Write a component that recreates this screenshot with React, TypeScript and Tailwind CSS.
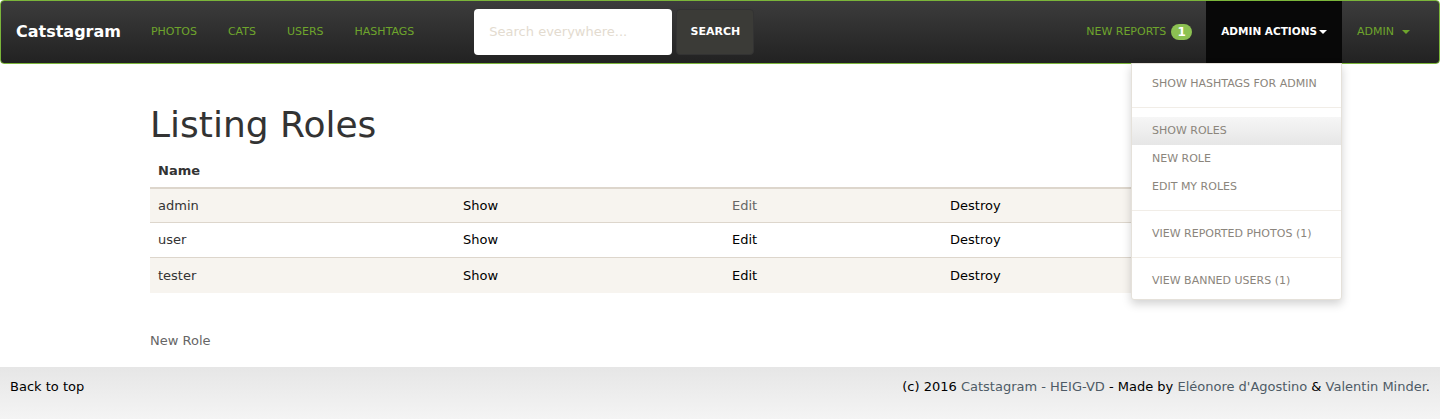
import React from "react";

const font = { fontFamily: '"DejaVu Sans", Verdana, sans-serif' };

const navLinks = ["PHOTOS", "CATS", "USERS", "HASHTAGS"];

const roles = ["admin", "user", "tester"];

const Caret: React.FC<{ className?: string }> = ({ className }) => (
  <svg className={className} width="8" height="4" viewBox="0 0 8 4">
    <path d="M0 0h8L4 4z" fill="currentColor" />
  </svg>
);

const AdminMenu: React.FC = () => (
  <div className="absolute left-[1131px] top-[63px] w-[211px] bg-white border border-[#e5e1da] rounded-b-[3px] shadow-[0_4px_10px_rgba(0,0,0,0.18)] pt-[6px] pb-[4px] text-[11px] leading-[14px] text-[#8b857c] z-10">
    <div className="px-5 py-[7px]">SHOW HASHTAGS FOR ADMIN</div>
    <div className="h-px bg-[#f1ede7] my-[9px]" />
    <div className="px-5 py-[7px] bg-gradient-to-b from-[#f6f6f6] to-[#e6e6e6]">SHOW ROLES</div>
    <div className="px-5 py-[7px]">NEW ROLE</div>
    <div className="px-5 py-[7px]">EDIT MY ROLES</div>
    <div className="h-px bg-[#f1ede7] my-[9px]" />
    <div className="px-5 py-[7px]">VIEW REPORTED PHOTOS (1)</div>
    <div className="h-px bg-[#f1ede7] my-[9px]" />
    <div className="px-5 py-[7px]">VIEW BANNED USERS (1)</div>
  </div>
);

const Navbar: React.FC = () => (
  <div className="h-[64px] border border-[#7bb53a] rounded-[4px] bg-gradient-to-b from-[#3c3c3c] to-[#222222] flex items-stretch overflow-hidden">
    <div className="flex items-center pl-[15px] pr-[15px] text-white text-[16px] font-bold">Catstagram</div>
    <div className="flex items-center gap-[31px] pl-[15px] text-[11px] text-[#6ea52c]">
      {navLinks.map((l) => (
        <span key={l}>{l}</span>
      ))}
    </div>
    <div className="flex items-center ml-[60px] gap-[4px]">
      <div className="w-[198px] h-[46px] bg-white rounded-[4px] flex items-center px-[15px] text-[13px] text-[#e3dbcf]">
        Search everywhere...
      </div>
      <div className="w-[78px] h-[46px] bg-[#3b3b37] rounded-[4px] border border-[#333] flex items-center justify-center text-white text-[11px] font-bold">
        SEARCH
      </div>
    </div>
    <div className="flex-1" />
    <div className="flex items-center pr-[14px] text-[11px] text-[#6ea52c] whitespace-nowrap">
      NEW REPORTS
      <span className="ml-[5px] w-[21px] h-[16px] rounded-full bg-[#8cc152] text-white font-bold text-[12px] flex items-center justify-center">1</span>
    </div>
    <div className="flex items-center bg-[#080808] pl-[15px] pr-[15px] text-white text-[10.5px] font-bold whitespace-nowrap">
      ADMIN ACTIONS
      <Caret className="ml-[2px] text-white" />
    </div>
    <div className="flex items-center pl-[15px] pr-[29px] text-[11px] text-[#6ea52c]">
      ADMIN
      <Caret className="ml-[8px] text-[#6ea52c]" />
    </div>
  </div>
);

export default function App() {
  return (
    <div className="relative min-h-[419px] bg-white text-[#222] flex flex-col" style={font}>
      <Navbar />
      <AdminMenu />
      <div className="w-[1140px] mx-auto flex-1">
        <h1 className="text-[36px] leading-[40px] text-[#333] mt-[41px] mb-[12px]">Listing Roles</h1>
        <table className="w-full text-[13px] border-collapse">
          <thead>
            <tr className="border-b-2 border-[#ddd6cc]">
              <th className="text-left font-bold text-[#333] px-[8px] pt-[4px] pb-[6px] w-[305px]">Name</th>
              <th className="w-[269px]" />
              <th className="w-[218px]" />
              <th />
            </tr>
          </thead>
          <tbody>
            {roles.map((r, i) => (
              <tr key={r} className={`${i % 2 === 0 ? "bg-[#f7f4ef]" : "bg-white"} ${i > 0 ? "border-t border-[#ddd6cc]" : ""}`}>
                <td className="px-[8px] h-[35px] text-[#333]">{r}</td>
                <td className="px-[8px] text-black">Show</td>
                <td className={`px-[8px] ${i === 0 ? "text-[#666]" : "text-black"}`}>Edit</td>
                <td className="px-[8px] text-black">Destroy</td>
              </tr>
            ))}
          </tbody>
        </table>
        <div className="mt-[38px] text-[13px] text-[#666]">New Role</div>
      </div>
      <div className="mt-[16px] h-[52px] bg-gradient-to-b from-[#e6e6e6] to-[#f4f4f4] flex items-start justify-between px-[10px] pt-[10px] text-[13px] text-black">
        <span>Back to top</span>
        <span>
          (c) 2016 <span className="text-[#4e5b66]">Catstagram - HEIG-VD</span> - Made by{" "}
          <span className="text-[#4e5b66]">Eléonore d'Agostino</span> &amp;{" "}
          <span className="text-[#4e5b66]">Valentin Minder</span>.
        </span>
      </div>
    </div>
  );
}
